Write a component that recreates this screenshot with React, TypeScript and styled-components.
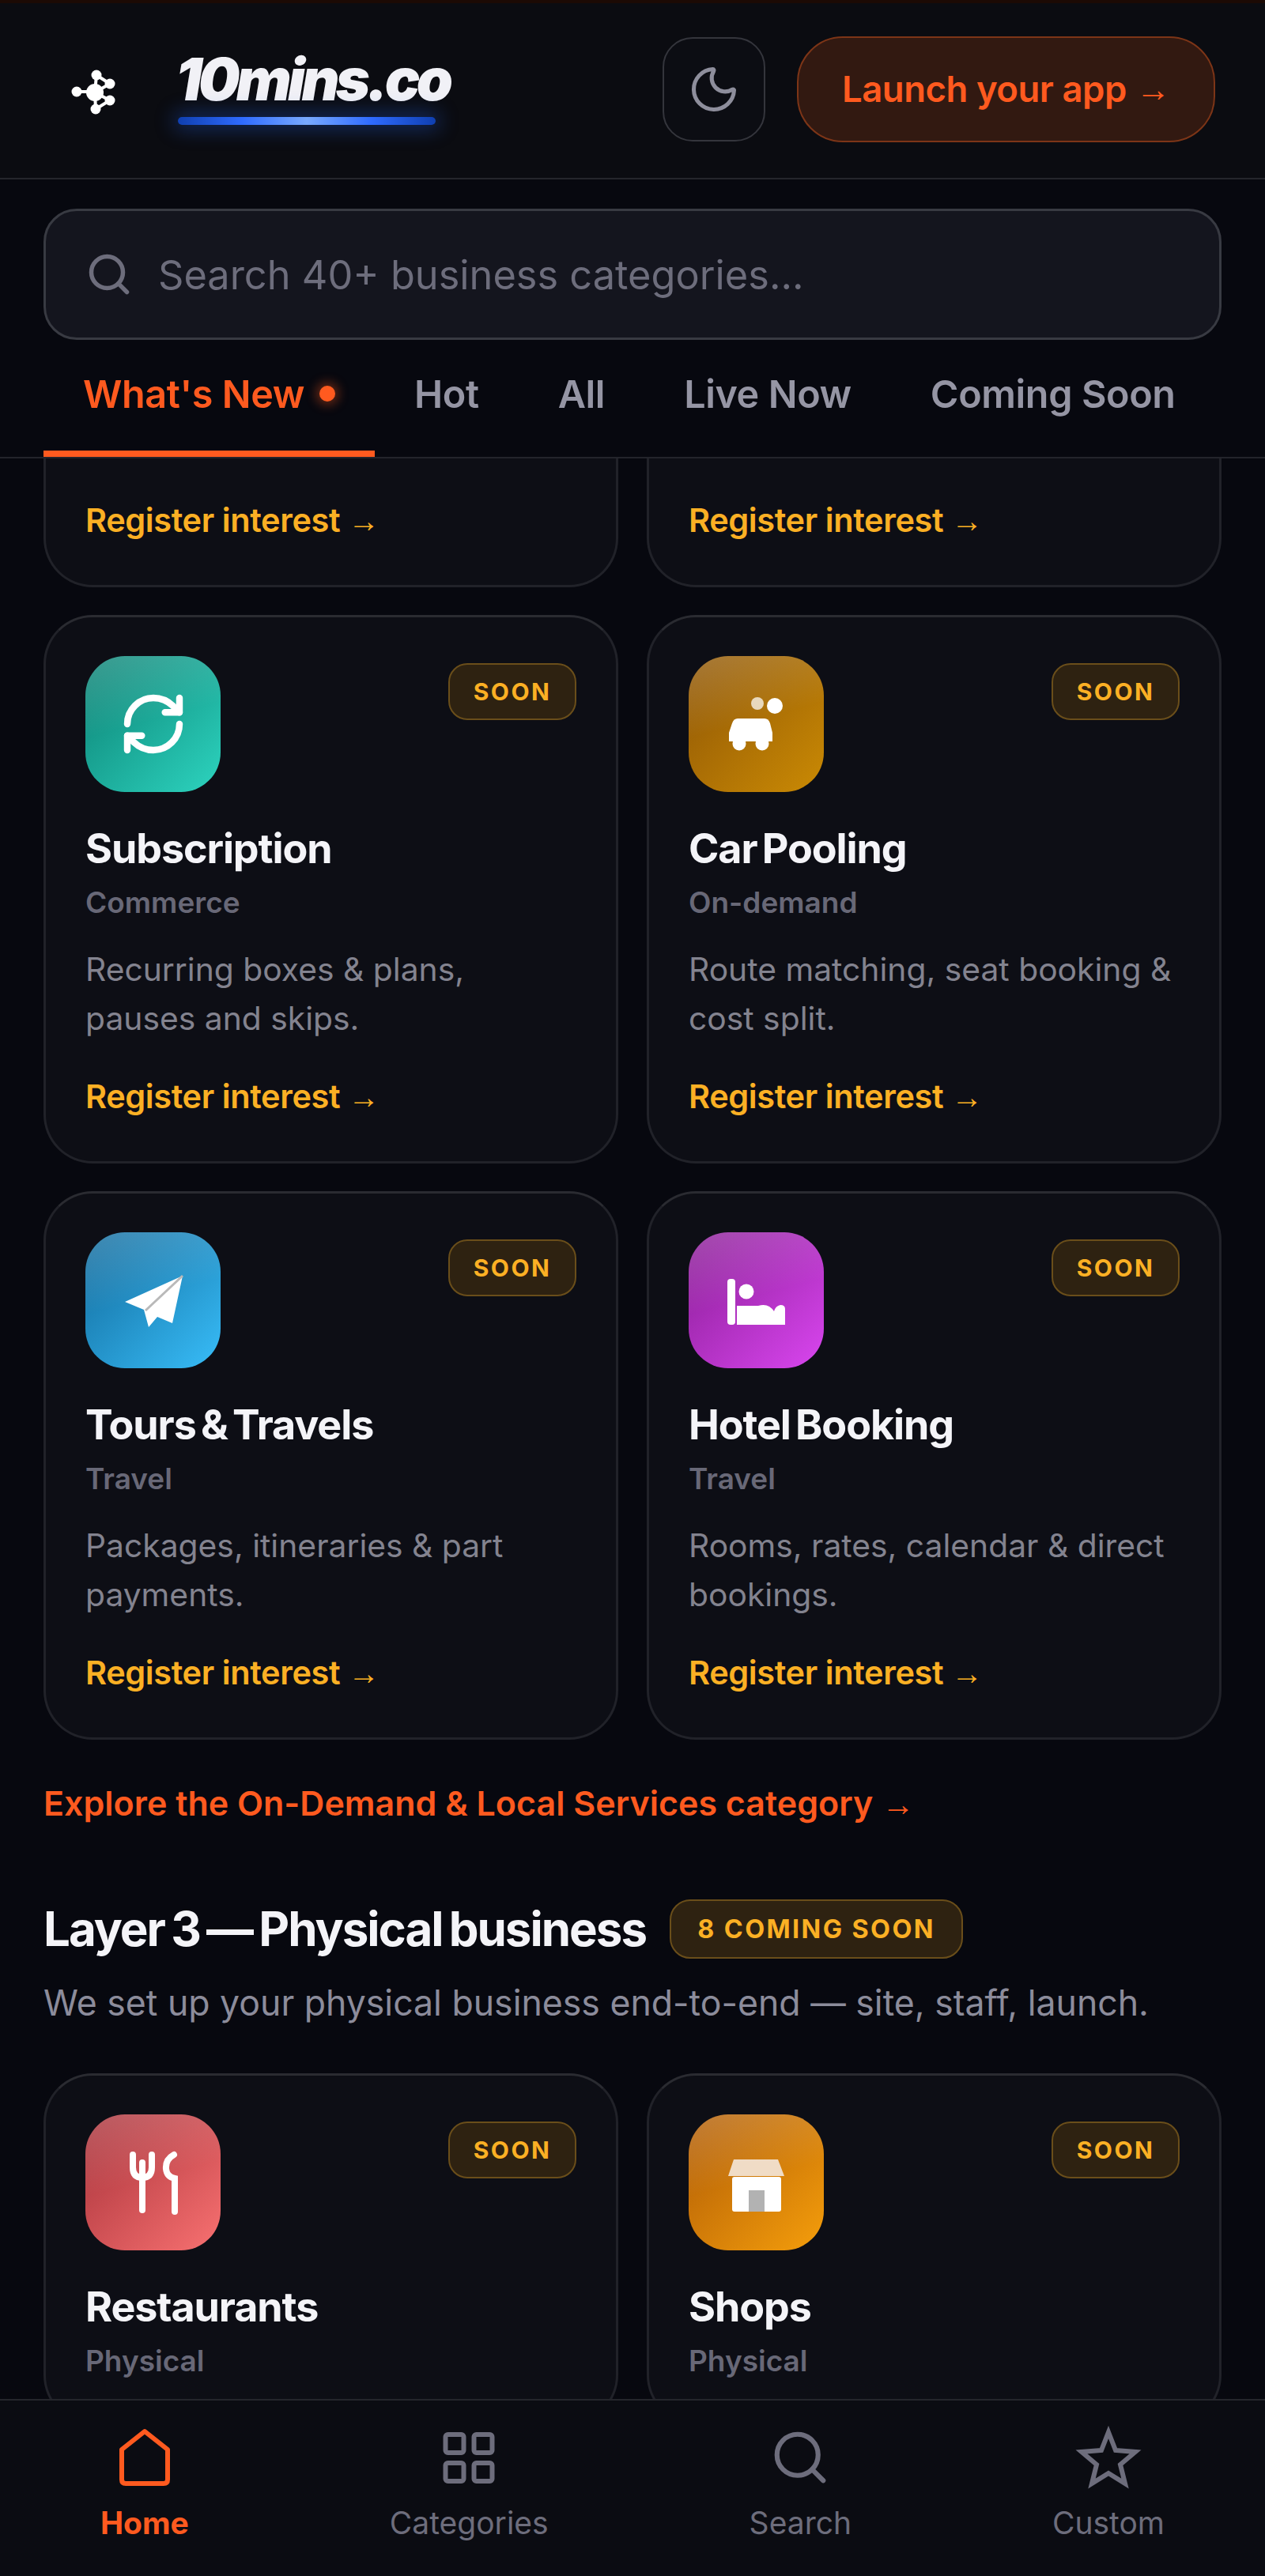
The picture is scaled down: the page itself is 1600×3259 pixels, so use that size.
import styled, { createGlobalStyle } from "styled-components";
import { Moon, RefreshCw, Search } from "lucide-react";
import type { ReactNode } from "react";

const GlobalStyle = createGlobalStyle`
  * { box-sizing: border-box; }
  html, body { margin: 0; padding: 0; background: #07080f; }
  body { font-family: "Inter", "Liberation Sans", sans-serif; }
`;

const LogoMark = () => (
  <svg width="65" height="65" viewBox="0 0 65 65" fill="none" stroke="#fff" strokeWidth="4">
    <path d="M12 32H35M35 33L37 11L54 22L35 33L54 43L36 54L35 33" />
    <g fill="#fff" stroke="none">
      <circle cx="12" cy="32" r="6.5" />
      <circle cx="35" cy="33" r="11" />
      <circle cx="37" cy="11" r="6.5" />
      <circle cx="54" cy="22" r="6.5" />
      <circle cx="54" cy="43" r="6.5" />
      <circle cx="36" cy="54" r="6.5" />
    </g>
  </svg>
);

const CarIcon = () => (
  <TileArt viewBox="0 0 171 171">
    <circle cx="87" cy="59" r="8" fill="#fff" opacity="0.72" />
    <circle cx="109" cy="62" r="10" fill="#fff" />
    <path d="M62 78H96Q101 78 103 84L106 96V107H51V96L55 84Q57 78 62 78Z" fill="#fff" />
    <circle cx="64" cy="110" r="8.5" fill="#fff" />
    <circle cx="93" cy="110" r="8.5" fill="#fff" />
  </TileArt>
);

const PlaneIcon = () => (
  <TileArt viewBox="0 0 171 171">
    <polygon points="123,54 50,87 74,97 80,119 91,106 110,114" fill="#fff" />
    <path d="M123 54L76 98" stroke="#b9b9b9" strokeWidth="3" />
  </TileArt>
);

const BedIcon = () => (
  <TileArt viewBox="0 0 171 171">
    <rect x="49" y="58" width="10" height="58" rx="4" fill="#fff" />
    <circle cx="73" cy="74" r="9.5" fill="#fff" />
    <path d="M61 116V92H88Q101 88 108 99Q110 92 116 91Q122 91 122 96V116Z" fill="#fff" />
  </TileArt>
);

const CutleryIcon = () => (
  <TileArt viewBox="0 0 171 171" fill="none" stroke="#fff" strokeWidth="8" strokeLinecap="round">
    <path d="M60 50V66Q60 79 72 79Q84 79 84 66V50" />
    <path d="M72 60V120" />
    <path d="M112 50Q101 56 102 68Q103 78 113 80V122" />
  </TileArt>
);

const ShopIcon = () => (
  <TileArt viewBox="0 0 171 171">
    <polygon points="57,56 113,56 121,77 50,77" fill="#f0dcc6" />
    <rect x="55" y="78" width="62" height="44" rx="3" fill="#fff" />
    <rect x="76" y="95" width="20" height="27" fill="#b2b2b2" />
  </TileArt>
);

const HomeIcon = () => (
  <svg width="72" height="80" viewBox="0 0 72 80" fill="none" stroke="currentColor" strokeWidth="6" strokeLinejoin="round">
    <path d="M36 7L65 30V68Q65 73 60 73H12Q7 73 7 68V30Z" />
  </svg>
);

const GridIcon = () => (
  <svg width="72" height="80" viewBox="0 0 72 80" fill="none" stroke="currentColor" strokeWidth="6">
    <rect x="6.5" y="11" width="23" height="23" rx="3" />
    <rect x="42.5" y="11" width="23" height="23" rx="3" />
    <rect x="6.5" y="47" width="23" height="23" rx="3" />
    <rect x="42.5" y="47" width="23" height="23" rx="3" />
  </svg>
);

const StarIcon = () => (
  <svg width="84" height="80" viewBox="0 0 84 80" fill="none" stroke="currentColor" strokeWidth="6" strokeLinejoin="miter">
    <polygon points="42,8 51,31 76,33 57,49 63,73 42,60 21,73 27,49 8,33 33,31" />
  </svg>
);

type CardData = { title: string; category: string; text: string[]; tile: string; icon: ReactNode };

const liveRow: CardData[] = [
  {
    title: "Subscription",
    category: "Commerce",
    text: ["Recurring boxes & plans,", "pauses and skips."],
    tile: "linear-gradient(135deg, #0b8073, #2dd4bf)",
    icon: <RefreshCw size={88} color="#fff" strokeWidth={2.3} />,
  },
  {
    title: "Car Pooling",
    category: "On-demand",
    text: ["Route matching, seat booking &", "cost split."],
    tile: "linear-gradient(135deg, #8f5606, #ca8a04)",
    icon: <CarIcon />,
  },
  {
    title: "Tours & Travels",
    category: "Travel",
    text: ["Packages, itineraries & part", "payments."],
    tile: "linear-gradient(135deg, #116a9c, #38bdf8)",
    icon: <PlaneIcon />,
  },
  {
    title: "Hotel Booking",
    category: "Travel",
    text: ["Rooms, rates, calendar & direct", "bookings."],
    tile: "linear-gradient(135deg, #8a1d96, #d946ef)",
    icon: <BedIcon />,
  },
];

const physicalRow: CardData[] = [
  {
    title: "Restaurants",
    category: "Physical",
    text: [],
    tile: "linear-gradient(135deg, #a8323a, #f87171)",
    icon: <CutleryIcon />,
  },
  {
    title: "Shops",
    category: "Physical",
    text: [],
    tile: "linear-gradient(135deg, #b05c06, #f59e0b)",
    icon: <ShopIcon />,
  },
];

function ServiceCard({ card }: { card: CardData }) {
  return (
    <Card>
      <CardTop>
        <Tile $bg={card.tile}>{card.icon}</Tile>
        <SoonBadge>SOON</SoonBadge>
      </CardTop>
      <CardTitle>{card.title}</CardTitle>
      <CardCategory>{card.category}</CardCategory>
      {card.text.length > 0 && (
        <>
          <CardText>
            {card.text.map((line) => (
              <span key={line}>{line}</span>
            ))}
          </CardText>
          <RegisterLink>
            Register interest <Arrow>→</Arrow>
          </RegisterLink>
        </>
      )}
    </Card>
  );
}

export default function App() {
  return (
    <Page>
      <GlobalStyle />
      <TopGlow />
      <Header>
        <LogoBox>
          <LogoMark />
          <LogoWords>
            <LogoText>10mins.co</LogoText>
            <LogoBar />
          </LogoWords>
        </LogoBox>
        <HeaderActions>
          <ThemeButton>
            <Moon size={68} color="#8e8e9c" strokeWidth={1.8} />
          </ThemeButton>
          <LaunchButton>
            Launch your app <Arrow>→</Arrow>
          </LaunchButton>
        </HeaderActions>
      </Header>

      <SearchArea>
        <SearchBox>
          <Search size={60} color="#6d6d7c" strokeWidth={2.2} />
          <Placeholder>Search 40+ business categories...</Placeholder>
        </SearchBox>
      </SearchArea>

      <Tabs>
        <Tab $active>
          What's New <TabDot />
        </Tab>
        <Tab>Hot</Tab>
        <Tab>All</Tab>
        <Tab>Live Now</Tab>
        <Tab>Coming Soon</Tab>
      </Tabs>

      <Content>
        <CardGrid>
          <ClippedCard>
            <RegisterLink>
              Register interest <Arrow>→</Arrow>
            </RegisterLink>
          </ClippedCard>
          <ClippedCard>
            <RegisterLink>
              Register interest <Arrow>→</Arrow>
            </RegisterLink>
          </ClippedCard>
          {liveRow.map((card) => (
            <ServiceCard key={card.title} card={card} />
          ))}
        </CardGrid>

        <ExploreLink>
          Explore the On-Demand &amp; Local Services category <Arrow>→</Arrow>
        </ExploreLink>

        <LayerHead>
          <LayerTitle>Layer 3 — Physical business</LayerTitle>
          <LayerChip>8 COMING SOON</LayerChip>
        </LayerHead>
        <LayerText>We set up your physical business end-to-end — site, staff, launch.</LayerText>

        <PhysicalGrid>
          {physicalRow.map((card) => (
            <ServiceCard key={card.title} card={card} />
          ))}
        </PhysicalGrid>
      </Content>

      <BottomNav>
        <NavItem $active>
          <NavIcon>
            <HomeIcon />
          </NavIcon>
          Home
        </NavItem>
        <NavItem>
          <NavIcon>
            <GridIcon />
          </NavIcon>
          Categories
        </NavItem>
        <NavItem>
          <NavIcon>
            <Search size={78} strokeWidth={1.9} />
          </NavIcon>
          Search
        </NavItem>
        <NavItem>
          <NavIcon>
            <StarIcon />
          </NavIcon>
          Custom
        </NavItem>
      </BottomNav>
    </Page>
  );
}

const Page = styled.div`
  width: 1600px;
  height: 3259px;
  display: flex;
  flex-direction: column;
  overflow: hidden;
  background: #07080f;
`;

const TopGlow = styled.div`
  height: 4px;
  flex: none;
  background: #1c0a04;
`;

const Header = styled.header`
  height: 223px;
  flex: none;
  display: flex;
  align-items: center;
  justify-content: space-between;
  padding: 0 63px 4px 85px;
  background: #0b0c11;
  border-bottom: 2px solid #25262c;
`;

const LogoBox = styled.div`
  display: flex;
  align-items: center;
  gap: 72px;
  margin-top: 8px;
`;

const LogoWords = styled.div`
  display: flex;
  flex-direction: column;
  margin-top: -14px;
`;

const LogoText = styled.div`
  font-size: 74px;
  line-height: 76px;
  font-weight: 900;
  font-style: italic;
  letter-spacing: -4.6px;
  color: #f1f1f6;
`;

const LogoBar = styled.div`
  width: 326px;
  height: 10px;
  margin: 10px 0 0 3px;
  border-radius: 5px;
  background: linear-gradient(90deg, #0f3fb0, #2f6bff 25%, #79aaff 50%, #2f6bff 75%, #0f3fb0);
  box-shadow: 0 0 24px 6px rgba(37, 99, 235, 0.35);
`;

const HeaderActions = styled.div`
  display: flex;
  align-items: center;
  gap: 40px;
`;

const ThemeButton = styled.div`
  width: 130px;
  height: 132px;
  display: flex;
  align-items: center;
  justify-content: center;
  border: 2px solid #34353c;
  border-radius: 38px;
  background: #0c0d13;
`;

const LaunchButton = styled.div`
  width: 529px;
  height: 134px;
  display: flex;
  align-items: center;
  justify-content: center;
  gap: 12px;
  border: 2px solid #7d3517;
  border-radius: 58px;
  background: #321911;
  color: #ff5a1f;
  font-size: 45.5px;
  font-weight: 600;
  letter-spacing: -0.5px;
`;

const Arrow = styled.span`
  font-family: "Liberation Sans", sans-serif;
  font-size: 0.96em;
  line-height: 1;
  font-weight: 700;
`;

const SearchArea = styled.div`
  flex: none;
  padding: 37px 55px 0;
`;

const SearchBox = styled.div`
  height: 166px;
  display: flex;
  align-items: center;
  gap: 32px;
  padding-left: 50px;
  border: 3px solid #383a42;
  border-radius: 42px;
  background: #14151e;
`;

const Placeholder = styled.span`
  font-size: 50.5px;
  color: #6d6d7c;
`;

const Tabs = styled.nav`
  flex: none;
  display: flex;
  padding-left: 55px;
  border-bottom: 2px solid #23242b;
`;

const Tab = styled.div<{ $active?: boolean }>`
  display: flex;
  align-items: center;
  gap: 19px;
  height: 148px;
  padding: 0 50px 4px;
  border-bottom: 8px solid ${(p) => (p.$active ? "#ff5a1f" : "transparent")};
  color: ${(p) => (p.$active ? "#ff5a1f" : "#9595a4")};
  font-size: 48.5px;
  font-weight: 600;
  letter-spacing: -0.4px;
`;

const TabDot = styled.span`
  width: 20px;
  height: 20px;
  border-radius: 50%;
  background: #ff5a1f;
  box-shadow: 0 0 14px 4px rgba(255, 90, 31, 0.4);
`;

const Content = styled.main`
  flex: 1;
  min-height: 0;
  overflow: hidden;
  padding: 0 55px;
`;

const CardGrid = styled.div`
  display: grid;
  grid-template-columns: 727px 727px;
  gap: 35px 36px;
`;

const PhysicalGrid = styled(CardGrid)`
  margin-top: 58px;
`;

const Card = styled.article`
  display: flex;
  flex-direction: column;
  padding: 49px 50px 55px;
  border: 3px solid #212229;
  border-top-color: #2a2b31;
  border-radius: 62px;
  background: #0d0e15;
`;

const ClippedCard = styled(Card)`
  padding-top: 51px;
  border-top: none;
  border-radius: 0 0 62px 62px;
`;

const CardTop = styled.div`
  display: flex;
  align-items: flex-start;
  justify-content: space-between;
`;

const Tile = styled.div<{ $bg: string }>`
  width: 171px;
  height: 172px;
  display: flex;
  align-items: center;
  justify-content: center;
  border-radius: 50px;
  background: linear-gradient(165deg, rgba(255, 255, 255, 0.2), rgba(255, 255, 255, 0) 48%), ${(p) => p.$bg};
`;

const TileArt = styled.svg`
  width: 171px;
  height: 171px;
`;

const SoonBadge = styled.span`
  width: 162px;
  height: 72px;
  margin-top: 9px;
  display: flex;
  align-items: center;
  justify-content: center;
  border: 2px solid #6a4e1a;
  border-radius: 24px;
  background: #2e2211;
  color: #fbb024;
  font-size: 30px;
  font-weight: 700;
  letter-spacing: 2.4px;
`;

const CardTitle = styled.h3`
  margin: 42px 0 0;
  font-size: 52px;
  line-height: 60px;
  font-weight: 700;
  letter-spacing: -1.1px;
  word-spacing: -5px;
  color: #f4f4f8;
`;

const CardCategory = styled.div`
  margin-top: 16px;
  font-size: 37px;
  line-height: 44px;
  font-weight: 600;
  color: #686877;
`;

const CardText = styled.p`
  display: flex;
  flex-direction: column;
  margin: 31px 0 0;
  font-size: 40.8px;
  line-height: 62px;
  color: #83838f;
`;

const RegisterLink = styled.div`
  margin-top: 41px;
  font-size: 41.5px;
  line-height: 54px;
  font-weight: 600;
  letter-spacing: -0.4px;
  color: #fbb024;

  ${ClippedCard} & {
    margin-top: 0;
  }
`;

const ExploreLink = styled.div`
  margin-top: 52px;
  font-size: 43px;
  line-height: 56px;
  font-weight: 600;
  color: #ff5a1f;
`;

const LayerHead = styled.div`
  display: flex;
  align-items: center;
  gap: 30px;
  margin-top: 94px;
`;

const LayerTitle = styled.h2`
  margin: 0;
  font-size: 60px;
  line-height: 75px;
  font-weight: 700;
  letter-spacing: -2px;
  word-spacing: -4px;
  color: #f4f4f8;
`;

const LayerChip = styled.span`
  width: 371px;
  height: 75px;
  display: flex;
  align-items: center;
  justify-content: center;
  border: 2px solid #6a4e1a;
  border-radius: 26px;
  background: #2e2211;
  color: #fbb024;
  font-size: 32.4px;
  font-weight: 700;
  letter-spacing: 2.4px;
`;

const LayerText = styled.p`
  margin: 25px 0 0;
  font-size: 44.6px;
  line-height: 62px;
  color: #8c8c9b;
`;

const BottomNav = styled.footer`
  height: 224px;
  flex: none;
  display: flex;
  justify-content: space-around;
  padding-top: 30px;
  border-top: 2px solid #25262c;
  background: #0b0c12;
`;

const NavItem = styled.div<{ $active?: boolean }>`
  display: flex;
  flex-direction: column;
  align-items: center;
  color: ${(p) => (p.$active ? "#ff5a1f" : "#6d6d7c")};
  font-size: 39px;
  line-height: 50px;
  font-weight: ${(p) => (p.$active ? 700 : 400)};
`;

const NavIcon = styled.div`
  height: 84px;
  display: flex;
  align-items: center;
  justify-content: center;
  margin-bottom: 16px;
`;
